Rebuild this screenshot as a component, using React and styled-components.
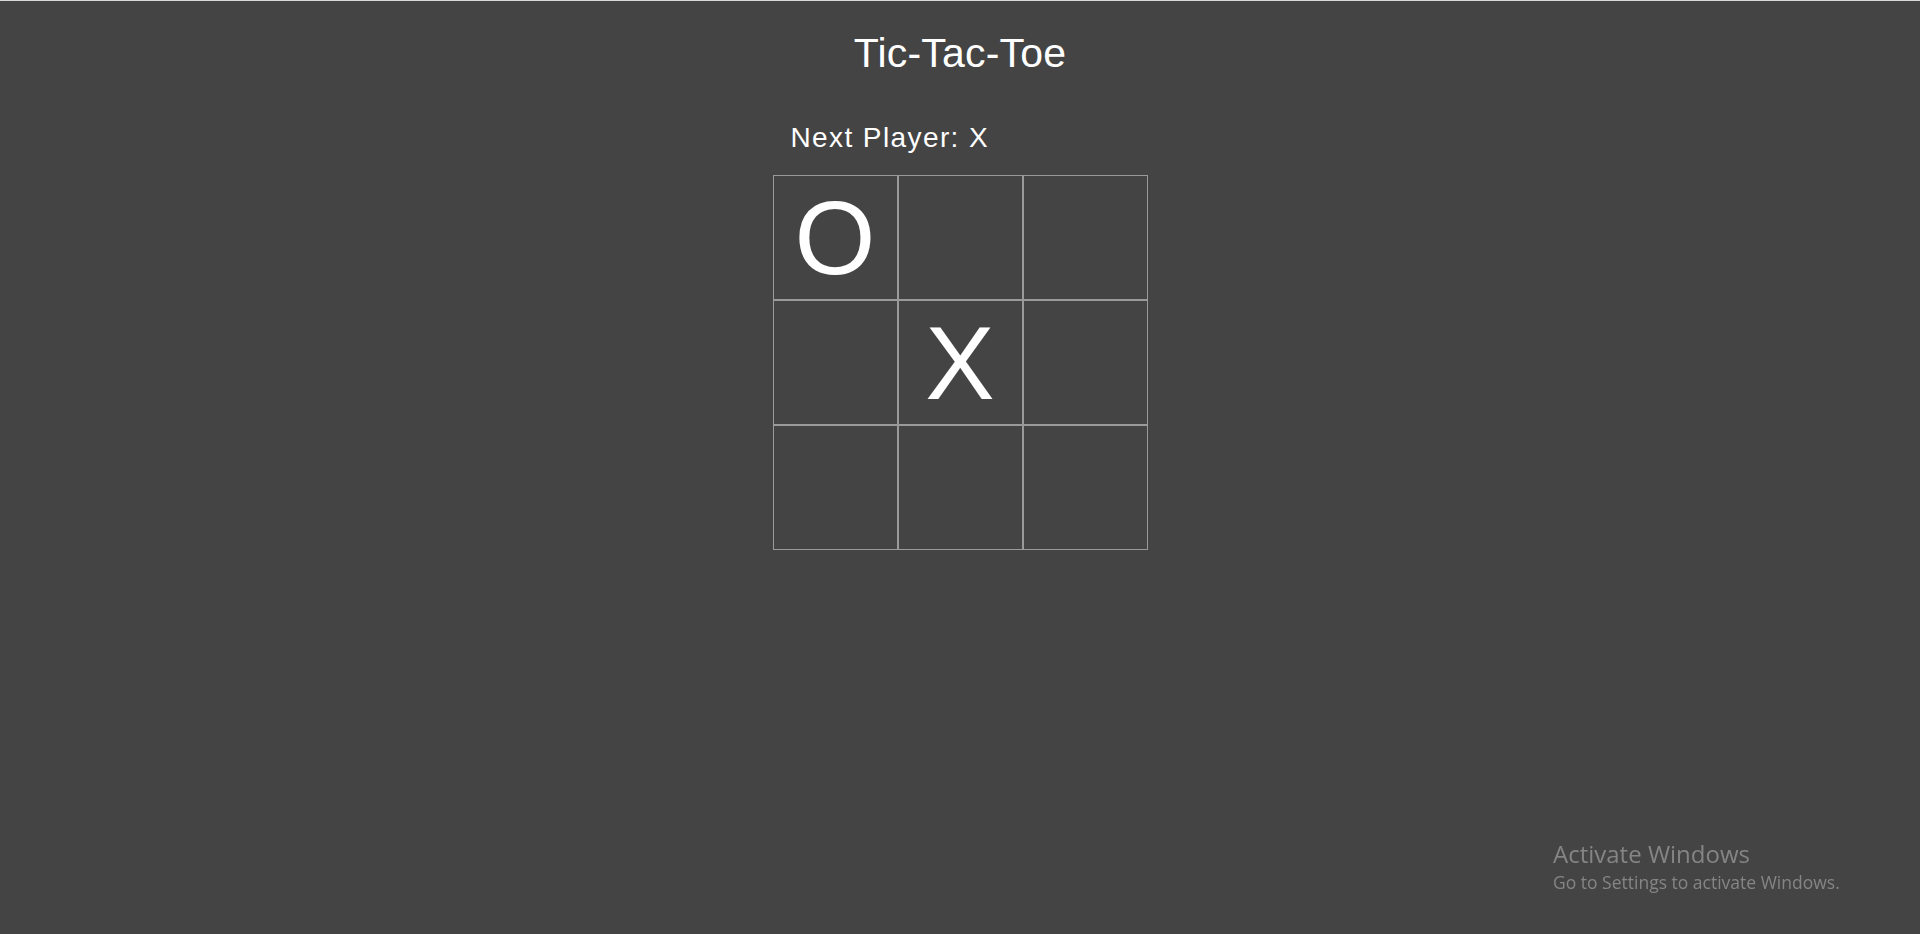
import React, { useState } from "react";
import styled, { createGlobalStyle } from "styled-components";

const GlobalStyle = createGlobalStyle`
  html, body {
    margin: 0;
    padding: 0;
    background: #444444;
  }

  body {
    font-family: "Liberation Sans", Arial, sans-serif;
    color: #ffffff;
  }
`;

const Page = styled.div`
  min-height: 934px;
  box-sizing: border-box;
  border-top: 1px solid #d9d9d9;
  display: flex;
  flex-direction: column;
  align-items: center;
`;

const Title = styled.h1`
  margin: 32px 0 0;
  font-size: 41px;
  line-height: 41px;
  font-weight: normal;
  letter-spacing: 0.2px;
`;

const Game = styled.div`
  margin-top: 50px;
  display: flex;
  flex-direction: column;
  width: 375px;
`;

const Status = styled.div`
  padding-left: 18px;
  font-size: 28px;
  line-height: 28px;
  letter-spacing: 1.4px;
`;

const Board = styled.div`
  margin-top: 23px;
  display: grid;
  grid-template-columns: repeat(3, 125px);
  grid-auto-rows: 125px;
`;

const Square = styled.button`
  all: unset;
  box-sizing: border-box;
  display: flex;
  align-items: center;
  justify-content: center;
  border: 1px solid #9a9a9a;
  font-family: "Liberation Sans", Arial, sans-serif;
  font-size: 104px;
  line-height: 104px;
  color: #ffffff;
  cursor: pointer;
`;

const Watermark = styled.div`
  position: fixed;
  left: 1553px;
  top: 837px;
  font-family: "Open Sans", "Noto Sans", sans-serif;
  color: #858585;
  pointer-events: none;
`;

const WatermarkTitle = styled.div`
  font-size: 24px;
  line-height: 33px;
`;

const WatermarkText = styled.div`
  font-size: 17.5px;
  line-height: 24px;
`;

export default function App() {
  const [squares, setSquares] = useState(["O", null, null, null, "X", null, null, null, null]);
  const [xNext, setXNext] = useState(true);

  const play = (i) => {
    if (squares[i]) return;
    const next = squares.slice();
    next[i] = xNext ? "X" : "O";
    setSquares(next);
    setXNext(!xNext);
  };

  return (
    <>
      <GlobalStyle />
      <Page>
        <Title>Tic-Tac-Toe</Title>
        <Game>
          <Status>Next Player: {xNext ? "X" : "O"}</Status>
          <Board>
            {squares.map((value, i) => (
              <Square key={i} onClick={() => play(i)}>
                {value}
              </Square>
            ))}
          </Board>
        </Game>
      </Page>
      <Watermark>
        <WatermarkTitle>Activate Windows</WatermarkTitle>
        <WatermarkText>Go to Settings to activate Windows.</WatermarkText>
      </Watermark>
    </>
  );
}
